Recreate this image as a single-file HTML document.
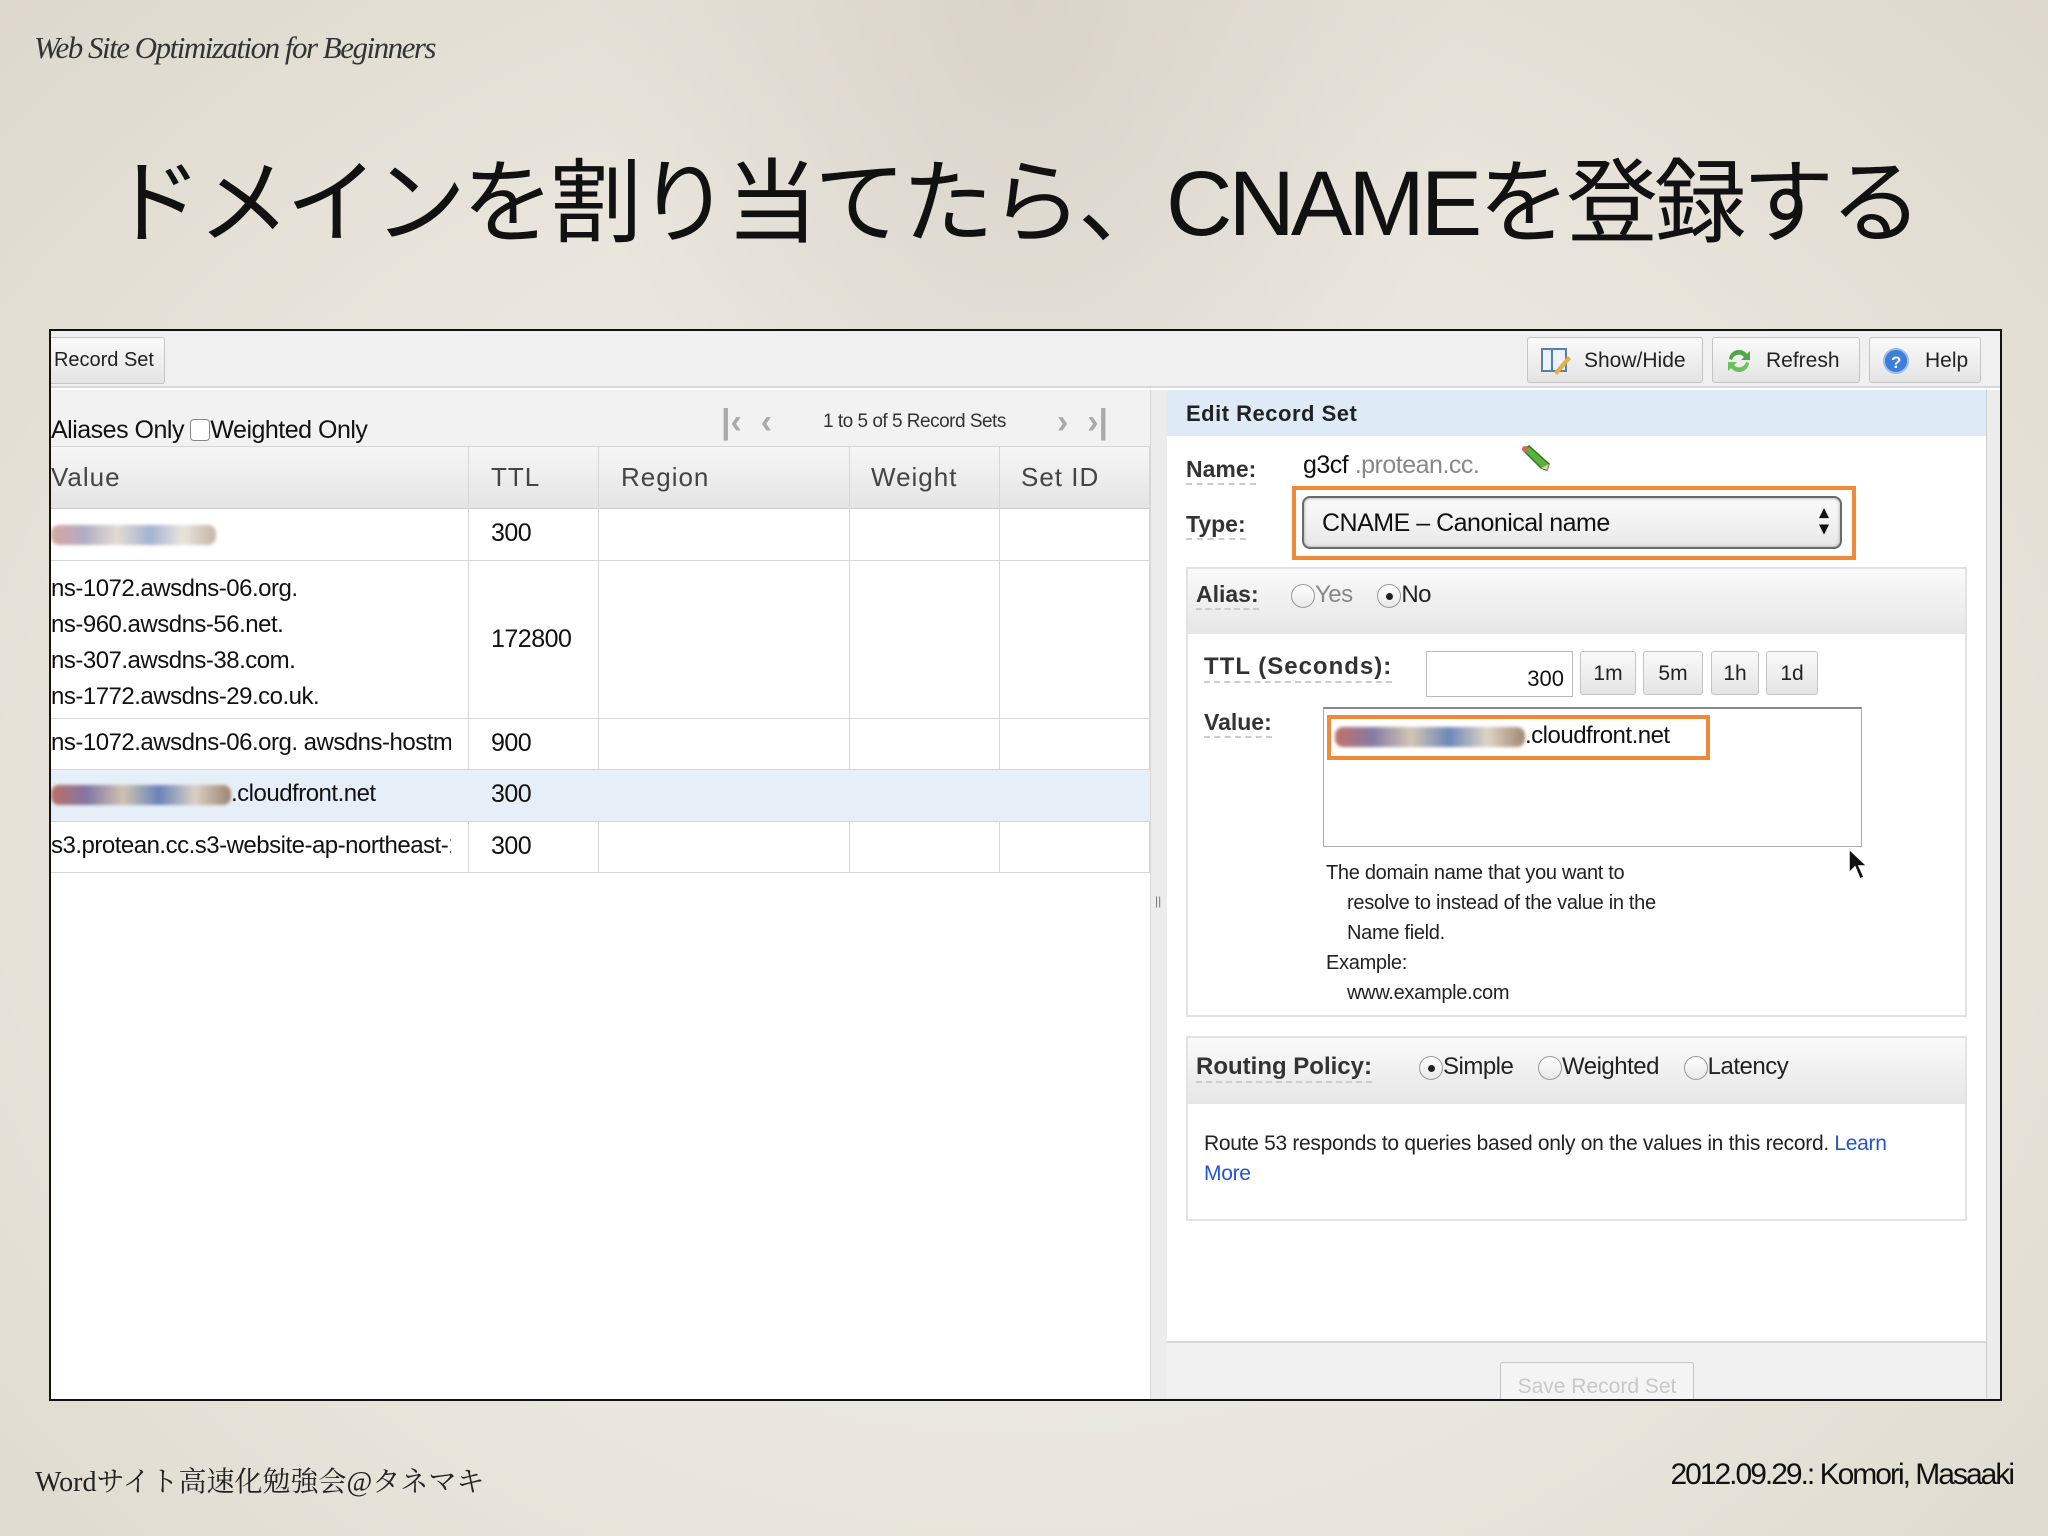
<!DOCTYPE html>
<html><head><meta charset="utf-8"><style>
*{margin:0;padding:0;box-sizing:border-box}
body{width:2048px;height:1536px;position:relative;overflow:hidden;background:#ebe7df;font-family:"Liberation Sans",sans-serif;color:#111}
.bg{position:absolute;inset:0;background:radial-gradient(ellipse at 50% 0%,#d9d4ca 0%,rgba(0,0,0,0) 30%),radial-gradient(ellipse at 50% 55%,#f1eee8 0%,#e9e5dc 60%,#ddd8cd 100%)}
.a{position:absolute;white-space:nowrap}
.n{font-family:"Liberation Sans Narrow","Liberation Sans",sans-serif;white-space:nowrap}
.frame{position:absolute;left:49px;top:329px;width:1953px;height:1072px;border:2px solid #111;background:#fff;overflow:hidden}
.btn{position:absolute;border:1px solid #c4c4c4;border-radius:3px;background:linear-gradient(#fafafa,#e4e4e4);font-size:21px;color:#222}
.cell{position:absolute;border-right:1px solid #d6d6d6}
.hl{position:absolute;border-bottom:1px solid #d6d6d6;left:0;width:1099px}
.rad{display:inline-block;width:24px;height:24px;border:1px solid #999;border-radius:50%;vertical-align:middle;background:linear-gradient(#fff,#e8e8e8);position:relative}
.rad.on::after{content:"";position:absolute;left:8px;top:8px;width:7px;height:7px;border-radius:50%;background:#222}
.lbl{font-weight:bold;color:#333;border-bottom:2px dashed #ccc}
.blur{display:inline-block;height:20px;border-radius:8px;background:linear-gradient(90deg,#b05040,#6a5a90,#c9b8a0,#4a6aa8,#d8c8b8,#8a6a50);filter:blur(1.5px);opacity:.8;vertical-align:middle}
</style></head><body>
<div class="bg"></div>
<div class="a" style="left:34px;top:30px;font-family:'Liberation Serif',serif;font-style:italic;font-size:31px;color:#333;letter-spacing:-1.5px">Web Site Optimization for Beginners</div>
<div class="a" style="left:110px;top:152px;font-size:92px;color:#111;font-family:'Liberation Sans','Noto Sans CJK JP',sans-serif;letter-spacing:-4px;line-height:1.15">ドメインを割り当てたら、CNAMEを登録する</div>

<div class="frame">
 <div class="a" style="left:0;top:0;width:1953px;height:57px;background:#f0f0f0;border-bottom:2px solid #d8d8d8"></div>
 <div class="btn n" style="left:-10px;top:6px;width:124px;height:47px;padding-top:11px;text-align:right;padding-right:10px;font-size:20px">Record Set</div>
 <div class="btn n" style="left:1476px;top:6px;width:176px;height:46px;padding:11px 0 0 56px">Show/Hide
  <svg class="a" style="left:12px;top:8px" width="32" height="30"><rect x="2" y="3" width="24" height="22" fill="#eaf2fb" stroke="#5a7fae" stroke-width="2"/><line x1="12" y1="3" x2="12" y2="25" stroke="#5a7fae" stroke-width="2"/><path d="M14 26 L28 10 L31 13 L17 29 Z" fill="#e8b040"/></svg></div>
 <div class="btn n" style="left:1661px;top:6px;width:148px;height:46px;padding:11px 0 0 53px">Refresh
  <svg class="a" style="left:10px;top:7px" width="32" height="32"><path d="M6 14 A10 10 0 0 1 24 9 L27 6 L27 15 L18 15 L21 12 A7 7 0 0 0 9 15 Z" fill="#4aa848"/><path d="M26 18 A10 10 0 0 1 8 23 L5 26 L5 17 L14 17 L11 20 A7 7 0 0 0 23 17 Z" fill="#6cc060"/></svg></div>
 <div class="btn n" style="left:1818px;top:6px;width:112px;height:46px;padding:11px 0 0 55px">Help
  <svg class="a" style="left:12px;top:9px" width="28" height="28"><circle cx="14" cy="14" r="12" fill="#3c7ed8" stroke="#9bbcea" stroke-width="2"/><text x="9" y="21" font-size="17" font-weight="bold" fill="#fff" font-family="Liberation Sans">?</text></svg></div>

 <div class="a" style="left:0;top:59px;width:1099px;height:56px;background:#f2f2f2"></div>
 <div class="a n" style="left:0;top:85px;font-size:25px;letter-spacing:-.5px">Aliases Only <span style="display:inline-block;width:20px;height:22px;border:1px solid #888;border-radius:4px;vertical-align:-3px;background:#fff"></span>Weighted Only</div>
 <div class="a" style="left:670px;top:72px;font-size:34px;color:#aaa;font-weight:bold">|‹&nbsp;&nbsp;‹</div>
 <div class="a n" style="left:772px;top:80px;font-size:19px;color:#333;letter-spacing:-.5px">1 to 5 of 5 Record Sets</div>
 <div class="a" style="left:1006px;top:72px;font-size:34px;color:#aaa;font-weight:bold">›&nbsp;&nbsp;›|</div>
 <div class="a" style="left:0;top:115px;width:1099px;height:63px;background:linear-gradient(#f6f6f6,#e4e4e4);border-top:1px solid #d6d6d6;border-bottom:1px solid #ccc"></div>
 <div class="cell" style="left:0;top:115px;width:418px;height:427px"></div>
 <div class="cell" style="left:418px;top:115px;width:130px;height:427px"></div>
 <div class="cell" style="left:548px;top:115px;width:251px;height:427px"></div>
 <div class="cell" style="left:799px;top:115px;width:150px;height:427px"></div>
 <div class="cell" style="left:949px;top:115px;width:150px;height:427px"></div>
 <div class="a n" style="left:0;top:131px;font-size:26px;color:#444;letter-spacing:1px">Value</div>
 <div class="a n" style="left:440px;top:131px;font-size:26px;color:#444;letter-spacing:1px">TTL</div>
 <div class="a n" style="left:570px;top:131px;font-size:26px;color:#444;letter-spacing:1px">Region</div>
 <div class="a n" style="left:820px;top:131px;font-size:26px;color:#444;letter-spacing:1px">Weight</div>
 <div class="a n" style="left:970px;top:131px;font-size:26px;color:#444;letter-spacing:1px">Set ID</div>
 <div class="hl" style="top:178px;height:52px"></div>
 <div class="hl" style="top:230px;height:158px"></div>
 <div class="hl" style="top:388px;height:51px"></div>
 <div class="hl" style="top:439px;height:52px;background:#e6eef8"></div>
 <div class="hl" style="top:491px;height:51px"></div>
 <div class="a" style="left:0;top:194px"><span class="blur" style="width:165px;opacity:.5"></span></div>
 <div class="a n" style="left:440px;top:188px;font-size:25px;letter-spacing:-.5px">300</div>
 <div class="a n" style="left:0;top:240px;font-size:24px;line-height:36px;letter-spacing:-.5px">ns-1072.awsdns-06.org.<br>ns-960.awsdns-56.net.<br>ns-307.awsdns-38.com.<br>ns-1772.awsdns-29.co.uk.</div>
 <div class="a n" style="left:440px;top:294px;font-size:25px;letter-spacing:-.5px">172800</div>
 <div class="a n" style="left:0;top:398px;font-size:24px;width:400px;overflow:hidden;letter-spacing:-.5px">ns-1072.awsdns-06.org. awsdns-hostmaster</div>
 <div class="a n" style="left:440px;top:398px;font-size:25px;letter-spacing:-.5px">900</div>
 <div class="a n" style="left:0;top:449px;font-size:24px;letter-spacing:-.5px"><span class="blur" style="width:180px"></span>.cloudfront.net</div>
 <div class="a n" style="left:440px;top:449px;font-size:25px;letter-spacing:-.5px">300</div>
 <div class="a n" style="left:0;top:501px;font-size:24px;width:400px;overflow:hidden;letter-spacing:-.5px">s3.protean.cc.s3-website-ap-northeast-1</div>
 <div class="a n" style="left:440px;top:501px;font-size:25px;letter-spacing:-.5px">300</div>
 <div class="a" style="left:1099px;top:59px;width:17px;height:1013px;background:#ececec;border-left:1px solid #d6d6d6"></div>
 <div class="a" style="left:1104px;top:563px;font-size:12px;color:#777">||</div>

 <div class="a" style="left:1116px;top:59px;width:819px;height:46px;background:#deebf7"></div>
 <div class="a" style="left:1935px;top:59px;width:18px;height:1013px;background:#ececec;border-left:1px solid #ccc"></div>
 <div class="a" style="left:1135px;top:70px;font-size:22px;font-weight:bold;color:#222;letter-spacing:.5px">Edit Record Set</div>
 <div class="a lbl" style="left:1135px;top:125px;font-size:23px">Name:</div>
 <div class="a n" style="left:1252px;top:120px;font-size:25px;letter-spacing:-.5px">g3cf <span style="color:#888">.protean.cc.</span></div>
 <svg class="a" style="left:1468px;top:113px" width="34" height="30"><path d="M4 6 L10 2 L30 20 L28 26 L22 24 Z" fill="#5cb040" stroke="#2e7a20" stroke-width="1.5"/><path d="M22 24 L28 26 L30 20" fill="#e8c8a0"/><circle cx="6" cy="5" r="3" fill="#e06060"/></svg>
 <div class="a lbl" style="left:1135px;top:180px;font-size:23px">Type:</div>
 <div class="a" style="left:1241px;top:155px;width:564px;height:74px;border:4px solid #ef8a3a"></div>
 <div class="a n" style="left:1251px;top:165px;width:540px;height:53px;border:2px solid #6a6a6a;border-radius:8px;background:linear-gradient(#fafafa,#e9e9e9);font-size:25px;padding:11px 0 0 18px;box-shadow:inset 0 0 3px #999;letter-spacing:-.5px">CNAME – Canonical name<span class="a" style="right:12px;top:6px;font-size:18px;line-height:16px;font-weight:bold">▴<br>▾</span></div>

 <div class="a" style="left:1135px;top:236px;width:781px;height:450px;border:2px solid #e2e2e2"></div>
 <div class="a" style="left:1137px;top:238px;width:777px;height:65px;background:linear-gradient(#fafafa,#e6e6e6)"></div>
 <div class="a lbl" style="left:1145px;top:250px;font-size:23px">Alias:</div>
 <div class="a n" style="left:1240px;top:250px;font-size:24px;color:#888;letter-spacing:-.5px"><span class="rad"></span>Yes&nbsp;&nbsp;&nbsp;&nbsp;<span class="rad on"></span><span style="color:#222">No</span></div>
 <div class="a lbl" style="left:1153px;top:322px;font-size:24px;letter-spacing:1px">TTL (Seconds):</div>
 <div class="a n" style="left:1375px;top:320px;width:147px;height:46px;border:1px solid #bbb;font-size:22px;text-align:right;padding:14px 8px 0 0">300</div>
 <div class="btn n" style="left:1529px;top:320px;width:56px;height:44px;text-align:center;padding-top:10px">1m</div>
 <div class="btn n" style="left:1592px;top:320px;width:60px;height:44px;text-align:center;padding-top:10px">5m</div>
 <div class="btn n" style="left:1660px;top:320px;width:48px;height:44px;text-align:center;padding-top:10px">1h</div>
 <div class="btn n" style="left:1715px;top:320px;width:52px;height:44px;text-align:center;padding-top:10px">1d</div>
 <div class="a lbl" style="left:1153px;top:378px;font-size:23px">Value:</div>
 <div class="a" style="left:1272px;top:376px;width:539px;height:140px;border:1px solid #aaa;border-top:2px solid #888"></div>
 <div class="a" style="left:1276px;top:384px;width:383px;height:45px;border:4px solid #ef8a3a"></div>
 <div class="a n" style="left:1284px;top:391px;font-size:24px;letter-spacing:-.5px"><span class="blur" style="width:190px"></span>.cloudfront.net</div>
 <div class="a n" style="left:1275px;top:527px;font-size:20px;line-height:30px;color:#222;letter-spacing:-.3px">The domain name that you want to<br>&nbsp;&nbsp;&nbsp;&nbsp;resolve to instead of the value in the<br>&nbsp;&nbsp;&nbsp;&nbsp;Name field.<br>Example:<br>&nbsp;&nbsp;&nbsp;&nbsp;www.example.com</div>
 <svg class="a" style="left:1796px;top:516px" width="24" height="36"><path d="M2 2 L2 26 L8 20 L13 32 L17 30 L12 19 L20 19 Z" fill="#111" stroke="#fff" stroke-width="1.5"/></svg>

 <div class="a" style="left:1135px;top:705px;width:781px;height:185px;border:2px solid #e2e2e2"></div>
 <div class="a" style="left:1137px;top:707px;width:777px;height:66px;background:linear-gradient(#fafafa,#e6e6e6)"></div>
 <div class="a lbl" style="left:1145px;top:722px;font-size:24px">Routing Policy:</div>
 <div class="a n" style="left:1368px;top:722px;font-size:24px;color:#222;letter-spacing:-.5px"><span class="rad on"></span>Simple&nbsp;&nbsp;&nbsp;&nbsp;<span class="rad"></span>Weighted&nbsp;&nbsp;&nbsp;&nbsp;<span class="rad"></span>Latency</div>
 <div class="a n" style="left:1153px;top:798px;font-size:21px;line-height:30px;color:#222;letter-spacing:-.3px">Route 53 responds to queries based only on the values in this record. <span style="color:#2255cc">Learn</span><br><span style="color:#2255cc">More</span></div>

 <div class="a" style="left:1116px;top:1010px;width:819px;height:62px;background:#f0f0f0;border-top:2px solid #d6d6d6"></div>
 <div class="btn n" style="left:1449px;top:1031px;width:194px;height:50px;text-align:center;padding-top:12px;color:#c8c8c8;background:#f4f4f4">Save Record Set</div>
</div>

<div class="a" style="left:35px;top:1460px;font-size:28px;color:#222;font-family:'Liberation Serif','Noto Serif CJK SC',serif">Wordサイト高速化勉強会@タネマキ</div>
<div class="a n" style="right:35px;top:1458px;font-size:30px;color:#111;letter-spacing:-2px">2012.09.29.: Komori, Masaaki</div>
</body></html>
